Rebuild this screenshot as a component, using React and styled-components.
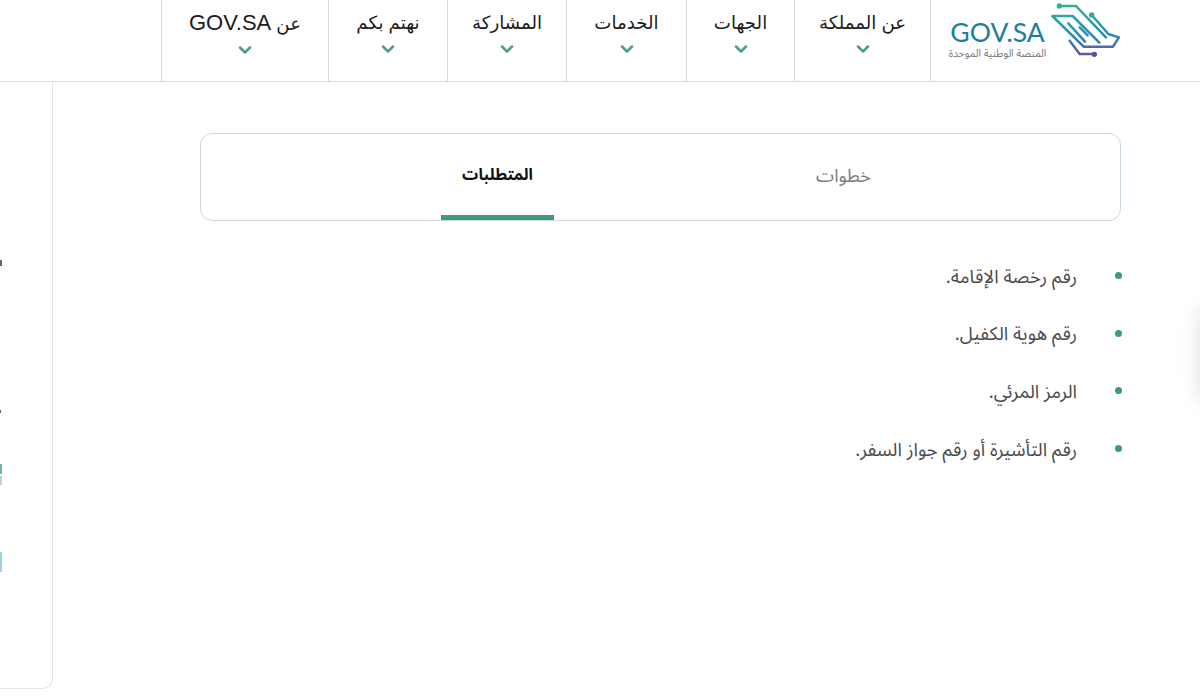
import React from "react";
import styled, { createGlobalStyle } from "styled-components";
import { ChevronDown } from "lucide-react";

const Global = createGlobalStyle`
  html, body { margin: 0; padding: 0; background: #fff; height: 100%; overflow: hidden; }
  body { font-family: "Noto Sans Arabic", "DejaVu Sans", "Liberation Sans", sans-serif; }
`;
const Page = styled.div`
  width: 1200px; height: 700px; position: relative; overflow: hidden; background: #fff;
  display: flex; flex-direction: column;
`;
const Header = styled.header`
  height: 82px; box-sizing: border-box; border-bottom: 1px solid #d5e0dd;
  display: flex; direction: rtl; padding-right: 79px;
`;
const LogoLink = styled.a`
  width: 190px; box-sizing: border-box; display: flex; direction: ltr; padding-left: 19px;
`;
const Wordmark = styled.div`
  width: 95px; margin-top: 17px; display: flex; flex-direction: column; align-items: center;
`;
const WordmarkTitle = styled.span`
  font-family: Lato, "Liberation Sans", sans-serif; font-size: 26.5px; line-height: 30px; color: #1b7e9b; white-space: nowrap;
`;
const WordmarkSub = styled.span`
  direction: rtl; font-size: 10.5px; line-height: 14px; color: #777; white-space: nowrap;
`;
const LogoMark = styled.svg`
  width: 70px; height: 62px; margin-left: 6px; flex: none;
`;
const NavItem = styled.a`
  width: ${p => p.$w}px; box-sizing: border-box; border-right: 1px solid #d2dcd9;
  display: flex; flex-direction: column; align-items: center; padding-top: 9px;
  font-family: "Liberation Sans", "DejaVu Sans", sans-serif; font-size: 18.2px; line-height: 28px; color: #1c1c1c;
  &:last-child { border-left: 1px solid #d2dcd9; }
`;
const Latin = styled.span`font-size: 22px;`;
const NavLabel = styled.span`white-space: nowrap;`;
const Chevron = styled(ChevronDown)`
  width: 20px; height: 20px; color: #4f9d84; stroke-width: 3; margin-top: 2px;
`;
const Body = styled.div`flex: 1; display: flex; padding-bottom: 11px;`;
const Side = styled.aside`
  width: 53px; box-sizing: border-box; border-right: 1px solid #dfe7e5; border-bottom: 1px solid #dfe7e5;
  border-bottom-right-radius: 10px; position: relative;
`;
const SideMark = styled.i`
  position: absolute; left: 0; top: ${p => p.$top}px; width: ${p => p.$w}px; height: ${p => p.$h}px;
  background: ${p => p.$c};
`;
const Main = styled.main`
  flex: 1; padding: 51px 79px 0 147px; direction: rtl;
`;
const Tabs = styled.div`
  height: 88px; box-sizing: border-box; border: 1px solid #ccdbd6; border-radius: 12px;
  display: flex; justify-content: space-between; padding: 0 228px 0 240px;
`;
const Tab = styled.div`
  width: ${p => p.$w}px; height: 86px; box-sizing: border-box; padding-top: ${p => p.$active ? 26 : 27}px; text-align: center;
  font-size: ${p => p.$active ? 16 : 18.3}px; line-height: 30px; font-weight: ${p => p.$active ? 700 : 400};
  color: ${p => p.$active ? "#111" : "#7c7c7c"};
  border-bottom: 5px solid ${p => p.$active ? "#3f9a7b" : "transparent"};
`;
const List = styled.ul`
  list-style: none; margin: 26px -1px 0 0; padding: 0; color: #4a4a4a;
`;
const Item = styled.li`
  height: 57.6px; display: flex; align-items: center; font-size: 18.6px; line-height: 28px;
`;
const Dot = styled.span`
  width: 7px; height: 7px; border-radius: 50%; background: #3f9a7b; margin-left: 38px; flex: none;
`;
const ItemText = styled.span`margin-top: 2px;`;
const Edge = styled.div`
  position: absolute; right: -30px; top: 305px; width: 30px; height: 100px; border-radius: 14px;
  background: #fff; box-shadow: 0 0 22px rgba(0,0,0,.13);
`;
const Logo = () => (
  <LogoMark viewBox="0 0 210 186">
    <defs>
      <linearGradient id="g" gradientUnits="userSpaceOnUse" x1="0" y1="10" x2="0" y2="170">
        <stop offset="0" stopColor="#2fb39a" />
        <stop offset="0.6" stopColor="#2a8db5" />
        <stop offset="1" stopColor="#6a4f9c" />
      </linearGradient>
    </defs>
    <g fill="none" stroke="url(#g)" strokeWidth="7.500" strokeLinejoin="round" strokeLinecap="round">
      <path d="M25 18H75L165 112" />
      <path d="M122 45L172 102L204 112L186 140H98L4 48H65L145 128" />
      <path d="M52 70L102 125" />
      <path d="M86 82L110 106" />
      <path d="M56 122L86 162H130" />
    </g>
    <circle cx="25" cy="18" r="8" fill="#2fb39a" />
    <circle cx="122" cy="45" r="8" fill="#2ca89c" />
    <circle cx="130" cy="163" r="8" fill="#5b4c93" />
  </LogoMark>
);
const nav = [
  [<NavLabel>عن المملكة</NavLabel>,136],[<NavLabel>الجهات</NavLabel>,108],[<NavLabel>الخدمات</NavLabel>,120],
  [<NavLabel>المشاركة</NavLabel>,119],[<NavLabel>نهتم بكم</NavLabel>,119],
  [<NavLabel>عن <Latin>GOV.SA</Latin></NavLabel>,168],
];
const items = ["رقم رخصة الإقامة.","رقم هوية الكفيل.","الرمز المرئي.","رقم التأشيرة أو رقم جواز السفر."];
export default function App() {
  return (
    <Page>
      <Global />
      <Header>
        <LogoLink>
          <Wordmark>
            <WordmarkTitle>GOV.SA</WordmarkTitle>
            <WordmarkSub>المنصة الوطنية الموحدة</WordmarkSub>
          </Wordmark>
          <Logo />
        </LogoLink>
        {nav.map(([t,w],i) => <NavItem key={i} $w={w}>{t}<Chevron /></NavItem>)}
      </Header>
      <Body>
        <Side>
          <SideMark $top={178} $w={2} $h={6} $c="#666" />
          <SideMark $top={328} $w={1} $h={3} $c="#666" />
          <SideMark $top={382} $w={2} $h={10} $c="#6db5a0" />
          <SideMark $top={394} $w={2} $h={9} $c="#b5d6d6" />
          <SideMark $top={470} $w={2} $h={20} $c="#9fd0dc" />
        </Side>
        <Main>
          <Tabs>
            <Tab $w={97}>خطوات</Tab>
            <Tab $w={113} $active>المتطلبات</Tab>
          </Tabs>
          <List>
            {items.map(t => <Item key={t}><Dot /><ItemText>{t}</ItemText></Item>)}
          </List>
        </Main>
      </Body>
      <Edge />
    </Page>
  );
}
